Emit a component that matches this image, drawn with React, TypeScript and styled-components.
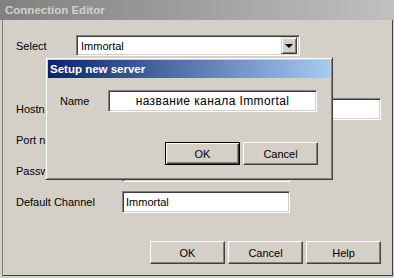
import React from 'react';
import styled, { createGlobalStyle, css } from 'styled-components';

const GlobalStyle = createGlobalStyle`
  html, body {
    margin: 0;
    padding: 0;
    background: #d4d0c8;
  }
  body {
    font-family: "Liberation Sans", Arial, sans-serif;
    font-size: 11px;
    color: #000;
  }
`;

const sunken = css`
  box-sizing: border-box;
  background: #fff;
  border-style: solid;
  border-width: 1px;
  border-color: #808080 #fff #fff #808080;
  box-shadow: inset 1px 1px 0 #404040, inset -1px -1px 0 #d4d0c8;
`;

const Window = styled.div`
  width: 394px;
  height: 278px;
  display: flex;
  flex-direction: column;
  background: #d4d0c8;
  overflow: hidden;
`;

const TitleBar = styled.div<{ $active?: boolean }>`
  height: ${({ $active }) => ($active ? '18px' : '20px')};
  flex-shrink: 0;
  display: flex;
  align-items: center;
  padding-left: ${({ $active }) => ($active ? '2px' : '5px')};
  font-weight: bold;
  font-size: 11.5px;
  color: ${({ $active }) => ($active ? '#fff' : '#d4d0c8')};
  background: ${({ $active }) =>
    $active
      ? 'linear-gradient(to right, #0a246a, #a6caf0)'
      : 'linear-gradient(to right, #808080, #c0c0c0)'};
`;

const Client = styled.div`
  position: relative;
  flex: 1;
  margin: 0 1px 2px 2px;
  border-left: 1px solid #808080;
  border-right: 1px solid #404040;
  border-bottom: 1px solid #404040;
  padding: 15px 11px 0 13px;
  display: flex;
  flex-direction: column;
`;

const Row = styled.div<{ $h: number }>`
  display: flex;
  align-items: center;
  height: ${({ $h }) => $h}px;
`;

const Fields = styled.div`
  display: flex;
  flex-direction: column;
  gap: 9px;
  margin-top: 42px;
`;

const Label = styled.span<{ $w: number }>`
  width: ${({ $w }) => $w}px;
  flex-shrink: 0;
  white-space: nowrap;
`;

const Combo = styled.div`
  ${sunken};
  width: 224px;
  height: 21px;
  display: flex;
  align-items: center;
  justify-content: space-between;
  padding: 0 2px 0 4px;
`;

const DropButton = styled.div`
  box-sizing: border-box;
  width: 16px;
  height: 17px;
  display: flex;
  align-items: center;
  justify-content: center;
  background: #d4d0c8;
  border-style: solid;
  border-width: 1px;
  border-color: #d4d0c8 #404040 #404040 #d4d0c8;
  box-shadow: inset 1px 1px 0 #fff, inset -1px -1px 0 #808080;
`;

const Arrow = styled.span`
  width: 0;
  height: 0;
  border-left: 4px solid transparent;
  border-right: 4px solid transparent;
  border-top: 4px solid #000;
`;

const Input = styled.div<{ $w: number; $center?: boolean }>`
  ${sunken};
  width: ${({ $w }) => $w}px;
  height: 22px;
  display: flex;
  align-items: center;
  justify-content: ${({ $center }) => ($center ? 'center' : 'flex-start')};
  padding: 0 3px;
  font-size: ${({ $center }) => ($center ? '12px' : '11px')};
  letter-spacing: ${({ $center }) => ($center ? '0.4px' : '0')};
  white-space: nowrap;
  overflow: hidden;
`;

const Buttons = styled.div<{ $top: number }>`
  display: flex;
  justify-content: flex-end;
  gap: 3px;
  margin-top: ${({ $top }) => $top}px;
`;

const Button = styled.div<{ $default?: boolean }>`
  box-sizing: border-box;
  width: 75px;
  height: 23px;
  display: flex;
  align-items: center;
  justify-content: center;
  background: #d4d0c8;
  border-style: solid;
  border-width: 1px;
  border-color: #fff #404040 #404040 #fff;
  box-shadow: inset -1px -1px 0 #808080;
  ${({ $default }) =>
    $default &&
    css`
      border-color: #000;
      box-shadow: inset 1px 1px 0 #fff, inset -1px -1px 0 #404040,
        inset -2px -2px 0 #808080;
    `}
`;

const Dialog = styled.div`
  position: absolute;
  left: 42px;
  top: 37px;
  box-sizing: border-box;
  width: 288px;
  height: 123px;
  background: #d4d0c8;
  border-style: solid;
  border-width: 1px;
  border-color: #d4d0c8 #404040 #404040 #d4d0c8;
  box-shadow: inset 1px 1px 0 #fff, inset -1px -1px 0 #808080;
  padding: 2px;
  display: flex;
  flex-direction: column;
`;

const DialogBody = styled.div`
  padding: 12px 12px 0 12px;
  display: flex;
  flex-direction: column;
`;

export default function App() {
  return (
    <>
      <GlobalStyle />
      <Window>
        <TitleBar>Connection Editor</TitleBar>
        <Client>
          <Row $h={21}>
            <Label $w={60}>Select</Label>
            <Combo>
              <span>Immortal</span>
              <DropButton>
                <Arrow />
              </DropButton>
            </Combo>
          </Row>

          <Fields>
            <Row $h={22}>
              <Label $w={106}>Hostname</Label>
              <Input $w={259} />
            </Row>
            <Row $h={22}>
              <Label $w={106}>Port number</Label>
              <Input $w={100} />
            </Row>
            <Row $h={22}>
              <Label $w={106}>Password</Label>
              <Input $w={168} />
            </Row>
            <Row $h={22}>
              <Label $w={106}>Default Channel</Label>
              <Input $w={168}>Immortal</Input>
            </Row>
          </Fields>

          <Buttons $top={28}>
            <Button>OK</Button>
            <Button>Cancel</Button>
            <Button>Help</Button>
          </Buttons>

          <Dialog>
            <TitleBar $active>Setup new server</TitleBar>
            <DialogBody>
              <Row $h={22}>
                <Label $w={48}>Name</Label>
                <Input $w={209} $center>
                  название канала Immortal
                </Input>
              </Row>
              <Buttons $top={30}>
                <Button $default>OK</Button>
                <Button>Cancel</Button>
              </Buttons>
            </DialogBody>
          </Dialog>
        </Client>
      </Window>
    </>
  );
}
